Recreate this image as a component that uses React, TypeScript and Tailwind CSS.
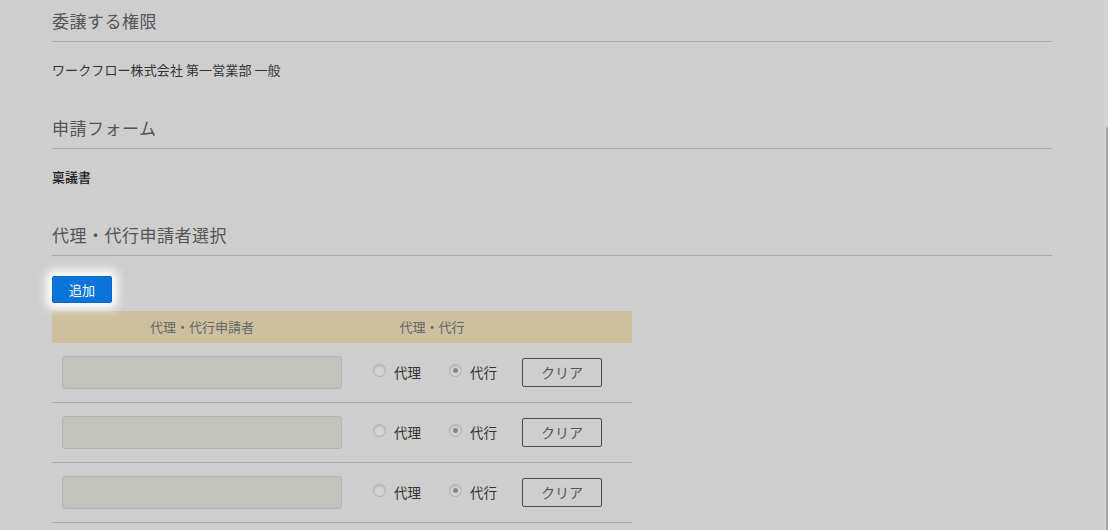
import React from "react";

const rows = [0, 1, 2];

const Radio = ({ checked, label }: { checked?: boolean; label: string }) => (
  <label className="flex items-center gap-[8px]">
    <span className="shrink-0 w-[13px] h-[13px] rounded-full border border-[#b0b0b0] bg-[#d4d4d4] flex items-center justify-center -mt-[4px] shadow-[inset_0_1px_2px_rgba(0,0,0,0.15)]">
      {checked && <span className="w-[5px] h-[5px] rounded-full bg-[#888]" />}
    </span>
    <span className="text-[13.5px] text-[#333]">{label}</span>
  </label>
);

const Section = ({ title, children }: { title: string; children?: React.ReactNode }) => (
  <div>
    <h2 className="h-[34px] leading-[26px] pb-[7px] text-[17px] font-normal text-[#555] border-b border-[#a9a9a9] tracking-[0.5px]">
      {title}
    </h2>
    {children}
  </div>
);

export default function App() {
  return (
    <div
      className="w-full h-[530px] flex bg-[#cecece] overflow-hidden"
      style={{ fontFamily: '"Noto Sans CJK JP", "Noto Sans", sans-serif' }}
    >
      <div className="flex-1 pl-[52px] pt-[8px]">
        <div className="w-[1000px]">
          <Section title="委譲する権限">
            <p className="mt-[18px] leading-[20px] text-[13px] text-[#333] tracking-[0.1px]">
              ワークフロー株式会社 第一営業部 一般
            </p>
          </Section>

          <div className="mt-[35px]">
            <Section title="申請フォーム">
              <p className="mt-[18px] leading-[20px] text-[13px] text-[#222] font-medium">稟議書</p>
            </Section>
          </div>

          <div className="mt-[35px]">
            <Section title="代理・代行申請者選択">
              <button className="mt-[20px] w-[60px] h-[27px] rounded-[2px] bg-[#0a74da] text-white text-[13px] border border-[#0866c0] shadow-[0_0_10px_6px_rgba(255,255,255,0.95)]">
                追加
              </button>

              <div className="mt-[8px] w-[580px]">
                <div className="h-[32px] flex items-center bg-[#cdc09f] text-[13px] text-[#666]">
                  <div className="w-[300px] text-center">代理・代行申請者</div>
                  <div className="w-[160px] text-center">代理・代行</div>
                  <div className="flex-1" />
                </div>
                {rows.map((r) => (
                  <div key={r} className="h-[60px] flex items-center border-b border-[#a9a9a9]">
                    <div className="w-[300px] px-[10px]">
                      <div className="h-[33px] w-[280px] rounded-[3px] border border-[#b4b4ae] bg-[#c3c3bd]" />
                    </div>
                    <div className="w-[160px] pl-[21px] flex items-center gap-[28px]">
                      <Radio label="代理" />
                      <Radio checked label="代行" />
                    </div>
                    <div className="flex-1 pl-[10px]">
                      <button className="w-[80px] h-[29px] rounded-[2px] border border-[#4a4a4a] text-[14px] text-[#555]">
                        クリア
                      </button>
                    </div>
                  </div>
                ))}
              </div>
            </Section>
          </div>
        </div>
      </div>
      <div className="w-[4px] h-full flex flex-col bg-[#d3d3d3]">
        <div className="h-[127px]" />
        <div className="flex-1 ml-[2px] bg-[#a8a8a8]" />
      </div>
    </div>
  );
}
